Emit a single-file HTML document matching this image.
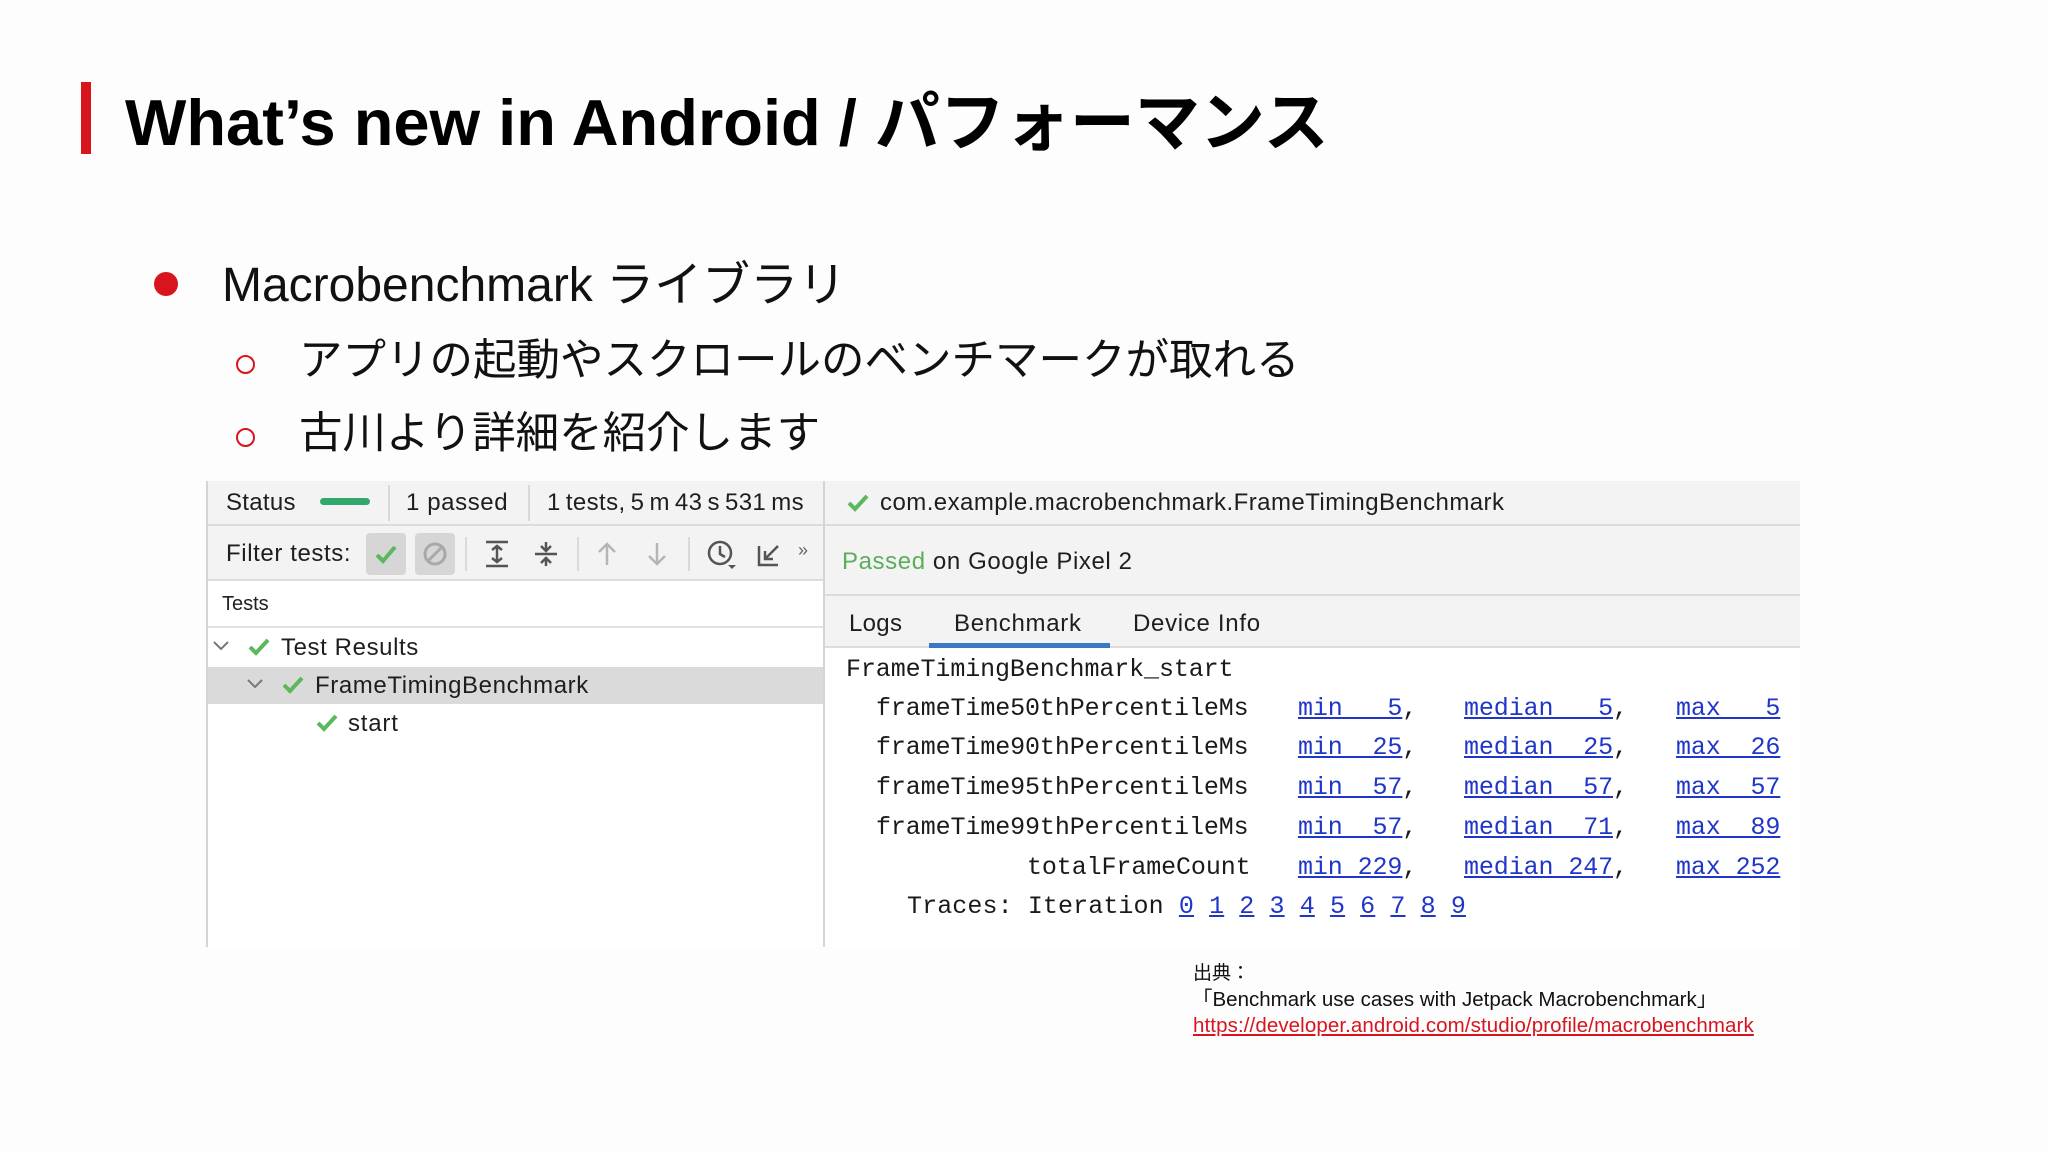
<!DOCTYPE html>
<html><head><meta charset="utf-8"><style>
*{margin:0;padding:0;box-sizing:border-box}
body{width:2048px;height:1152px;background:#fdfdfd;position:relative;overflow:hidden;font-family:"Liberation Sans","Noto Sans CJK JP",sans-serif;color:#111}
.a{position:absolute;white-space:nowrap;line-height:1}
.ui{font-size:24px;color:#1e1e1e;letter-spacing:0.3px}
.mono{font-family:"Liberation Mono","DejaVu Sans Mono",monospace;font-size:25px;color:#1a1a1a;letter-spacing:-0.1px}
.l{color:#1f36c8;text-decoration:underline}
.sep{position:absolute;width:2px;background:#d9d9d9}
</style></head><body>
<div class="a" style="left:81px;top:82px;width:10px;height:72px;background:#d8141c"></div>
<div class="a" style="left:125px;top:90px;font-size:65px;font-weight:bold;color:#000">What’s new in Android / パフォーマンス</div>

<div class="a" style="left:154px;top:272px;width:24px;height:24px;border-radius:50%;background:#d8141c"></div>
<div class="a" style="left:222px;top:262px;font-size:48px">Macrobenchmark ライブラリ</div>
<div class="a" style="left:236px;top:355px;width:19px;height:19px;border:2px solid #d8141c;border-radius:50%"></div>
<div class="a" style="left:299px;top:340px;font-size:43.5px">アプリの起動やスクロールのベンチマークが取れる</div>
<div class="a" style="left:236px;top:428px;width:19px;height:19px;border:2px solid #d8141c;border-radius:50%"></div>
<div class="a" style="left:299px;top:413px;font-size:43.5px">古川より詳細を紹介します</div>

<!-- panel -->
<div class="a" style="left:206px;top:481px;width:1594px;height:466px;background:#fff;border-left:2px solid #d5d5d5"></div>
<div class="a" style="left:208px;top:481px;width:615px;height:100px;background:#f3f3f3;border-bottom:2px solid #dcdcdc"></div>
<div class="a" style="left:208px;top:524px;width:615px;height:2px;background:#dcdcdc"></div>
<div class="a" style="left:208px;top:626px;width:615px;height:2px;background:#e2e2e2"></div>
<div class="a" style="left:823px;top:481px;width:2px;height:466px;background:#d5d5d5"></div>
<div class="a" style="left:825px;top:481px;width:975px;height:167px;background:#f3f3f3"></div>
<div class="a" style="left:825px;top:524px;width:975px;height:2px;background:#dcdcdc"></div>
<div class="a" style="left:825px;top:594px;width:975px;height:2px;background:#dcdcdc"></div>
<div class="a" style="left:825px;top:646px;width:975px;height:2px;background:#dcdcdc"></div>

<div class="a ui" style="left:226px;top:491px">Status</div>
<div class="a" style="left:320px;top:498px;width:50px;height:7px;border-radius:4px;background:#2fa86a"></div>
<div class="sep" style="left:388px;top:485px;height:36px"></div>
<div class="a ui" style="left:406px;top:491px;letter-spacing:0.6px">1 passed</div>
<div class="sep" style="left:528px;top:485px;height:36px"></div>
<div class="a ui" style="left:547px;top:491px;letter-spacing:0.4px;word-spacing:-2px">1 tests, 5 m 43 s 531 ms</div>

<div class="a ui" style="left:226px;top:542px;letter-spacing:0.6px">Filter tests:</div>
<div class="a" style="left:366px;top:533px;width:40px;height:42px;border-radius:4px;background:#d6d6d6"></div>
<svg class="a" style="left:374px;top:542px" width="24" height="24"><path d="M3 13l6 6L21 5" stroke="#5cb85c" stroke-width="4" fill="none"/></svg>
<div class="a" style="left:415px;top:533px;width:40px;height:42px;border-radius:4px;background:#d6d6d6"></div>
<svg class="a" style="left:422px;top:541px" width="26" height="26"><circle cx="13" cy="13" r="10" stroke="#a8a8a8" stroke-width="3" fill="none"/><path d="M7 19L19 7" stroke="#a8a8a8" stroke-width="3"/></svg>
<div class="sep" style="left:465px;top:537px;height:34px"></div>
<svg class="a" style="left:484px;top:540px" width="26" height="28"><path d="M2 2h22M2 26h22M13 7v14M8 10l5-4 5 4M8 18l5 4 5-4" stroke="#555" stroke-width="2.5" fill="none"/></svg>
<svg class="a" style="left:533px;top:540px" width="26" height="28"><path d="M2 14h22M13 2v9M13 17v9M8 6l5 5 5-5M8 23l5-5 5 5" stroke="#555" stroke-width="2.5" fill="none"/></svg>
<div class="sep" style="left:577px;top:537px;height:34px"></div>
<svg class="a" style="left:596px;top:541px" width="22" height="26"><path d="M11 24V3M3 11l8-8 8 8" stroke="#b5b5b5" stroke-width="2.5" fill="none"/></svg>
<svg class="a" style="left:646px;top:541px" width="22" height="26"><path d="M11 2v21M3 15l8 8 8-8" stroke="#b5b5b5" stroke-width="2.5" fill="none"/></svg>
<div class="sep" style="left:688px;top:537px;height:34px"></div>
<svg class="a" style="left:706px;top:539px" width="32" height="32"><circle cx="14" cy="14" r="11" stroke="#555" stroke-width="2.5" fill="none"/><path d="M14 7v8l5 3" stroke="#555" stroke-width="2.5" fill="none"/><path d="M22 26h8l-4 4z" fill="#555"/></svg>
<svg class="a" style="left:756px;top:542px" width="26" height="26"><path d="M3 4v19h19M9 17L22 4M9 9v8h8" stroke="#555" stroke-width="2.5" fill="none"/></svg>
<div class="a" style="left:798px;top:541px;font-size:18px;color:#666">»</div>

<div class="a" style="left:222px;top:594px;font-size:20px;color:#222">Tests</div>
<svg class="a" style="left:212px;top:640px" width="18" height="12"><path d="M2 2l7 7 7-7" stroke="#777" stroke-width="2" fill="none"/></svg>
<svg class="a" style="left:247px;top:636px" width="24" height="22"><path d="M3 11l6 6L21 4" stroke="#5cb85c" stroke-width="4" fill="none"/></svg>
<div class="a ui" style="left:281px;top:636px;letter-spacing:0.6px">Test Results</div>
<div class="a" style="left:208px;top:667px;width:615px;height:37px;background:#dadada"></div>
<svg class="a" style="left:246px;top:678px" width="18" height="12"><path d="M2 2l7 7 7-7" stroke="#777" stroke-width="2" fill="none"/></svg>
<svg class="a" style="left:281px;top:674px" width="24" height="22"><path d="M3 11l6 6L21 4" stroke="#5cb85c" stroke-width="4" fill="none"/></svg>
<div class="a ui" style="left:315px;top:674px;letter-spacing:0.6px">FrameTimingBenchmark</div>
<svg class="a" style="left:315px;top:712px" width="24" height="22"><path d="M3 11l6 6L21 4" stroke="#5cb85c" stroke-width="4" fill="none"/></svg>
<div class="a ui" style="left:348px;top:712px;letter-spacing:0.8px">start</div>

<svg class="a" style="left:846px;top:492px" width="24" height="22"><path d="M3 11l6 6L21 4" stroke="#5cb85c" stroke-width="4" fill="none"/></svg>
<div class="a ui" style="left:880px;top:491px;letter-spacing:0.45px">com.example.macrobenchmark.FrameTimingBenchmark</div>
<div class="a ui" style="left:842px;top:550px;letter-spacing:0.6px"><span style="color:#5cad5c">Passed</span> on Google Pixel 2</div>
<div class="a ui" style="left:849px;top:612px">Logs</div>
<div class="a ui" style="left:954px;top:612px;letter-spacing:0.7px">Benchmark</div>
<div class="a ui" style="left:1133px;top:612px;letter-spacing:0.7px">Device Info</div>
<div class="a" style="left:929px;top:643px;width:181px;height:5px;background:#3b78c4"></div>

<div class="a mono" style="left:846px;top:657px">FrameTimingBenchmark_start</div>
<div class="a mono" style="left:876px;top:696px">frameTime50thPercentileMs</div>
<div class="a mono" style="left:876px;top:735px">frameTime90thPercentileMs</div>
<div class="a mono" style="left:876px;top:775px">frameTime95thPercentileMs</div>
<div class="a mono" style="left:876px;top:815px">frameTime99thPercentileMs</div>
<div class="a mono" style="left:1027px;top:855px">totalFrameCount</div>
<div class="a mono" style="left:1298px;top:696px"><span class="l">min&nbsp;&nbsp;&nbsp;5</span>,</div>
<div class="a mono" style="left:1298px;top:735px"><span class="l">min&nbsp;&nbsp;25</span>,</div>
<div class="a mono" style="left:1298px;top:775px"><span class="l">min&nbsp;&nbsp;57</span>,</div>
<div class="a mono" style="left:1298px;top:815px"><span class="l">min&nbsp;&nbsp;57</span>,</div>
<div class="a mono" style="left:1298px;top:855px"><span class="l">min&nbsp;229</span>,</div>
<div class="a mono" style="left:1464px;top:696px"><span class="l">median&nbsp;&nbsp;&nbsp;5</span>,</div>
<div class="a mono" style="left:1464px;top:735px"><span class="l">median&nbsp;&nbsp;25</span>,</div>
<div class="a mono" style="left:1464px;top:775px"><span class="l">median&nbsp;&nbsp;57</span>,</div>
<div class="a mono" style="left:1464px;top:815px"><span class="l">median&nbsp;&nbsp;71</span>,</div>
<div class="a mono" style="left:1464px;top:855px"><span class="l">median&nbsp;247</span>,</div>
<div class="a mono" style="left:1676px;top:696px"><span class="l">max&nbsp;&nbsp;&nbsp;5</span></div>
<div class="a mono" style="left:1676px;top:735px"><span class="l">max&nbsp;&nbsp;26</span></div>
<div class="a mono" style="left:1676px;top:775px"><span class="l">max&nbsp;&nbsp;57</span></div>
<div class="a mono" style="left:1676px;top:815px"><span class="l">max&nbsp;&nbsp;89</span></div>
<div class="a mono" style="left:1676px;top:855px"><span class="l">max&nbsp;252</span></div>
<div class="a mono" style="left:907px;top:894px;letter-spacing:0.1px">Traces: Iteration <span class="l">0</span> <span class="l">1</span> <span class="l">2</span> <span class="l">3</span> <span class="l">4</span> <span class="l">5</span> <span class="l">6</span> <span class="l">7</span> <span class="l">8</span> <span class="l">9</span></div>

<div class="a" style="left:1193px;top:964px;font-size:19px;color:#111">出典：</div>
<div class="a" style="left:1192px;top:990px;font-size:20.5px;color:#111">「Benchmark use cases with Jetpack Macrobenchmark」</div>
<div class="a" style="left:1193px;top:1016px;font-size:20.5px;color:#d8141c;text-decoration:underline;letter-spacing:0.1px">https://developer.android.com/studio/profile/macrobenchmark</div>
</body></html>
